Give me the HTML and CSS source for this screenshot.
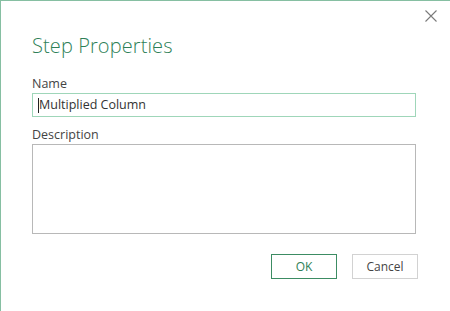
FILE: index.html
```html
<!DOCTYPE html>
<html>
<head>
    <title>Step Properties</title>
    <link rel="stylesheet" href="styles.css">
</head>
<body>
    <div class="dialog">
        <button class="close" aria-label="Close">
            <svg width="12" height="12" viewBox="0 0 12 12">
                <path d="M0.5 0.5 L11.5 11.5 M11.5 0.5 L0.5 11.5" stroke="#7a7a7a" stroke-width="1.1" fill="none"/>
            </svg>
        </button>

        <h1 class="title">Step Properties</h1>

        <label class="label" for="name">Name</label>
        <div class="input focused">
            <span class="caret"></span>Multiplied Column
        </div>

        <label class="label desc-label" for="desc">Description</label>
        <div class="textarea" id="desc"></div>

        <div class="actions">
            <button class="btn primary">OK</button>
            <button class="btn">Cancel</button>
        </div>
    </div>
</body>
</html>
```

FILE: styles.css
```css
html, body {
    margin: 0;
    padding: 0;
    background-color: #ffffff;
}

body {
    font-family: 'Open Sans', 'Noto Sans', sans-serif;
    color: #444444;
}

.dialog {
    position: relative;
    border-left: 1px solid #86bfa2;
    border-top: 1px solid #86bfa2;
    padding: 0 34px 0 31px;
    box-sizing: border-box;
    width: 450px;
    height: 311px;
    background: #fff;
}

/* close button sits in the corner over the header */
.close {
    position: absolute;
    top: 8px;
    right: 12px;
    width: 14px;
    height: 14px;
    padding: 0;
    border: none;
    background: none;
    display: flex;
    align-items: center;
    justify-content: center;
}

.title {
    margin: 0;
    padding-top: 31px;
    font-size: 20px;
    font-weight: 300;
    color: #2e7f57;
    line-height: 28px;
    letter-spacing: 0.1px;
}

.label {
    display: block;
    font-size: 12.5px;
    line-height: 17px;
    margin-top: 15px;
    margin-bottom: 1px;
    color: #444;
}

.desc-label {
    margin-top: 9px;
}

.input {
    height: 22px;
    border: 1px solid #9fd6b9;
    font-size: 12.5px;
    line-height: 22px;
    padding-left: 5px;
    color: #333;
    display: flex;
    align-items: center;
}

.caret {
    display: inline-block;
    width: 1px;
    height: 15px;
    background: #222;
}

.textarea {
    height: 88px;
    border: 1px solid #b8b8b8;
}

.actions {
    display: flex;
    justify-content: flex-end;
    gap: 15px;
    margin-top: 20px;
    margin-right: -2px;
}

.btn {
    width: 66px;
    height: 25px;
    font-family: 'Open Sans', 'Noto Sans', sans-serif;
    font-size: 12px;
    background: #fff;
    border: 1px solid #d2d2d2;
    color: #444;
    padding: 0;
}

.btn.primary {
    border-color: #3c8c63;
    color: #2e7f57;
}
```
